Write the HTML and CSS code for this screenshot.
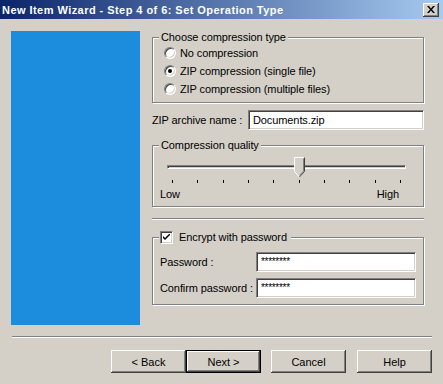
FILE: index.html
```html
<!DOCTYPE html>
<html lang="en">

<head>
    <meta charset="UTF-8">
    <title>New Item Wizard</title>
    <link rel="stylesheet" href="styles.css">
</head>

<body>
    <div class="window">
        <div class="titlebar">
            <span class="title">New Item Wizard - Step 4 of 6: Set Operation Type</span>
            <button class="close-btn" type="button">
                <svg width="8" height="7" viewBox="0 0 8 7">
                    <path d="M0 0h2l2 2.5L6 0h2L5 3.5 8 7H6L4 4.5 2 7H0l3-3.5z" fill="#000" />
                </svg>
            </button>
        </div>

        <div class="content">
            <div class="main">
                <div class="side-panel"></div>

                <div class="form">
                    <fieldset class="group group-type">
                        <legend>Choose compression type</legend>
                        <div class="group-body">
                            <label class="radio-row"><span class="radio"></span>No compression</label>
                            <label class="radio-row"><span class="radio checked"></span>ZIP compression (single file)</label>
                            <label class="radio-row"><span class="radio"></span>ZIP compression (multiple files)</label>
                        </div>
                    </fieldset>

                    <div class="field-row archive-row">
                        <span class="field-label">ZIP archive name :</span>
                        <div class="textbox archive-box">Documents.zip</div>
                    </div>

                    <fieldset class="group group-quality">
                        <legend>Compression quality</legend>
                        <div class="group-body">
                            <div class="slider">
                                <div class="track"></div>
                                <div class="thumb">
                                    <svg width="11" height="21" viewBox="0 0 11 21">
                                        <path d="M0.5 0.5h10v14l-5 5.5-5-5.5z" fill="#d4d0c8" stroke="#fff" />
                                        <path d="M10.5 0.5v14l-5 5.5" fill="none" stroke="#404040" />
                                        <path d="M9.5 1.5v12.6l-4 4.4" fill="none" stroke="#808080" />
                                    </svg>
                                </div>
                            </div>
                            <div class="ticks">
                                <span></span><span></span><span></span><span></span><span></span>
                                <span></span><span></span><span></span><span></span><span></span>
                            </div>
                            <div class="scale-labels">
                                <span>Low</span>
                                <span>High</span>
                            </div>
                        </div>
                    </fieldset>

                    <div class="separator short"></div>

                    <fieldset class="group group-encrypt">
                        <legend><span class="checkbox"><svg width="7" height="7" viewBox="0 0 7 7"><path d="M0 2v2l2 2 5-5V-1L2 4z" fill="#000" /></svg></span>Encrypt with password</legend>
                        <div class="group-body">
                            <div class="field-row">
                                <span class="field-label">Password :</span>
                                <div class="textbox pass-box">********</div>
                            </div>
                            <div class="field-row">
                                <span class="field-label">Confirm password :</span>
                                <div class="textbox pass-box">********</div>
                            </div>
                        </div>
                    </fieldset>
                </div>
            </div>

            <div class="separator wide"></div>

            <div class="buttons">
                <button class="btn" type="button">&lt; Back</button>
                <button class="btn default" type="button">Next &gt;</button>
                <button class="btn cancel" type="button">Cancel</button>
                <button class="btn help" type="button">Help</button>
            </div>
        </div>
    </div>
</body>

</html>
```

FILE: styles.css
```css
body {
    margin: 0;
    font-family: "Liberation Sans", Arial, sans-serif;
    font-size: 11px;
    letter-spacing: -0.1px;
    color: #000;
    background-color: #d4d0c8;
}

.window {
    width: 443px;
    height: 384px;
    background-color: #d4d0c8;
}

.titlebar {
    height: 19px;
    display: flex;
    align-items: center;
    justify-content: space-between;
    padding: 0 4px 0 2px;
    background: linear-gradient(to right, #0a246a, #a6caf0);
    box-sizing: border-box;
}

.title {
    color: white;
    font-weight: bold;
    font-size: 11px;
    letter-spacing: 0.45px;
}

.close-btn {
    width: 16px;
    height: 14px;
    padding: 0;
    margin: 0;
    display: flex;
    align-items: center;
    justify-content: center;
    background-color: #d4d0c8;
    border: none;
    box-shadow: inset -1px -1px #404040, inset 1px 1px #fff, inset -2px -2px #808080;
}

.content {
    padding: 12px 11px 0 11px;
}

.main {
    display: flex;
    height: 294px;
}

.side-panel {
    width: 129px;
    background-color: #1c8cdc;
}

.form {
    margin-left: 12px;
    width: 272px;
}

/* group boxes */

.group {
    margin: 0;
    padding: 0;
    border: 1px solid #808080;
    box-shadow: inset 1px 1px #fff, 1px 1px #fff;
}

.group legend {
    margin-left: 6px;
    padding: 0 2px;
    line-height: 13px;
    background-color: #d4d0c8;
}

.group-body {
    padding: 0 11px 4px 11px;
}

.radio-row {
    display: flex;
    align-items: center;
    height: 18px;
}

.radio {
    width: 12px;
    height: 12px;
    box-sizing: border-box;
    margin-right: 4px;
    border-radius: 50%;
    background-color: #fff;
    border: 1px solid;
    border-color: #808080 #fff #fff #808080;
    box-shadow: inset 1px 1px #404040, inset -1px -1px #d4d0c8;
    display: flex;
    align-items: center;
    justify-content: center;
}

.radio.checked::after {
    content: '';
    width: 4px;
    height: 4px;
    border-radius: 50%;
    background-color: #000;
}

.field-row {
    display: flex;
    align-items: center;
    justify-content: space-between;
}

.archive-row {
    margin-top: 7px;
}

.textbox {
    box-sizing: border-box;
    background-color: #fff;
    border: 1px solid;
    border-color: #808080 #fff #fff #808080;
    box-shadow: inset 1px 1px #404040, inset -1px -1px #d4d0c8;
    padding: 0 4px;
    display: flex;
    align-items: center;
}

.archive-box {
    width: 176px;
    height: 20px;
}

.pass-box {
    width: 160px;
    height: 20px;
    font-size: 10px;
    letter-spacing: -0.3px;
    align-items: flex-start;
    padding-top: 3px;
}

/* slider */

.group-quality {
    margin-top: 9px;
}

.group-quality .group-body {
    padding: 5px 17px 5px 7px;
}

.slider {
    position: relative;
    height: 21px;
}

.track {
    position: absolute;
    left: 7px;
    right: 0;
    top: 8px;
    height: 4px;
    box-sizing: border-box;
    border: 1px solid;
    border-color: #808080 #fff #fff #808080;
    box-shadow: inset 1px 1px #404040;
}

.thumb {
    position: absolute;
    left: 134px;
    top: 0;
    height: 21px;
}

.ticks {
    display: flex;
    justify-content: space-between;
    margin: 2px 5px 0 12px;
    height: 3px;
}

.ticks span {
    width: 1px;
    height: 3px;
    background-color: #000;
}

.scale-labels {
    display: flex;
    justify-content: space-between;
    margin-top: 5px;
    padding-right: 7px;
    line-height: 13px;
}

.separator {
    border-top: 1px solid #808080;
    border-bottom: 1px solid #fff;
    box-sizing: border-box;
    height: 2px;
}

.separator.short {
    margin-top: 11px;
}

.separator.wide {
    margin: 11px 0 0 1px;
}

/* encrypt group */

.group-encrypt {
    margin-top: 11px;
}

.group-encrypt legend {
    display: flex;
    align-items: center;
    padding: 0 4px 0 1px;
}

.checkbox {
    width: 13px;
    height: 13px;
    box-sizing: border-box;
    margin-right: 6px;
    background-color: #fff;
    border: 1px solid;
    border-color: #808080 #fff #fff #808080;
    box-shadow: inset 1px 1px #404040, inset -1px -1px #d4d0c8;
    display: flex;
    align-items: center;
    justify-content: center;
}

.group-encrypt .group-body {
    padding: 8px 7px 6px 7px;
    display: flex;
    flex-direction: column;
    gap: 6px;
}

/* bottom buttons */

.buttons {
    display: flex;
    justify-content: flex-end;
    margin-top: 12px;
}

.btn {
    width: 75px;
    height: 23px;
    padding: 0;
    font-family: "Liberation Sans", Arial, sans-serif;
    font-size: 11px;
    color: #000;
    background-color: #d4d0c8;
    border: none;
    box-shadow: inset -1px -1px #404040, inset 1px 1px #fff, inset -2px -2px #808080;
}

.btn.default {
    box-shadow: inset 0 0 0 1px #000, inset -2px -2px #404040, inset 2px 2px #fff, inset -3px -3px #808080;
}

.btn.cancel {
    margin-left: 10px;
}

.btn.help {
    margin-left: 11px;
}
```
